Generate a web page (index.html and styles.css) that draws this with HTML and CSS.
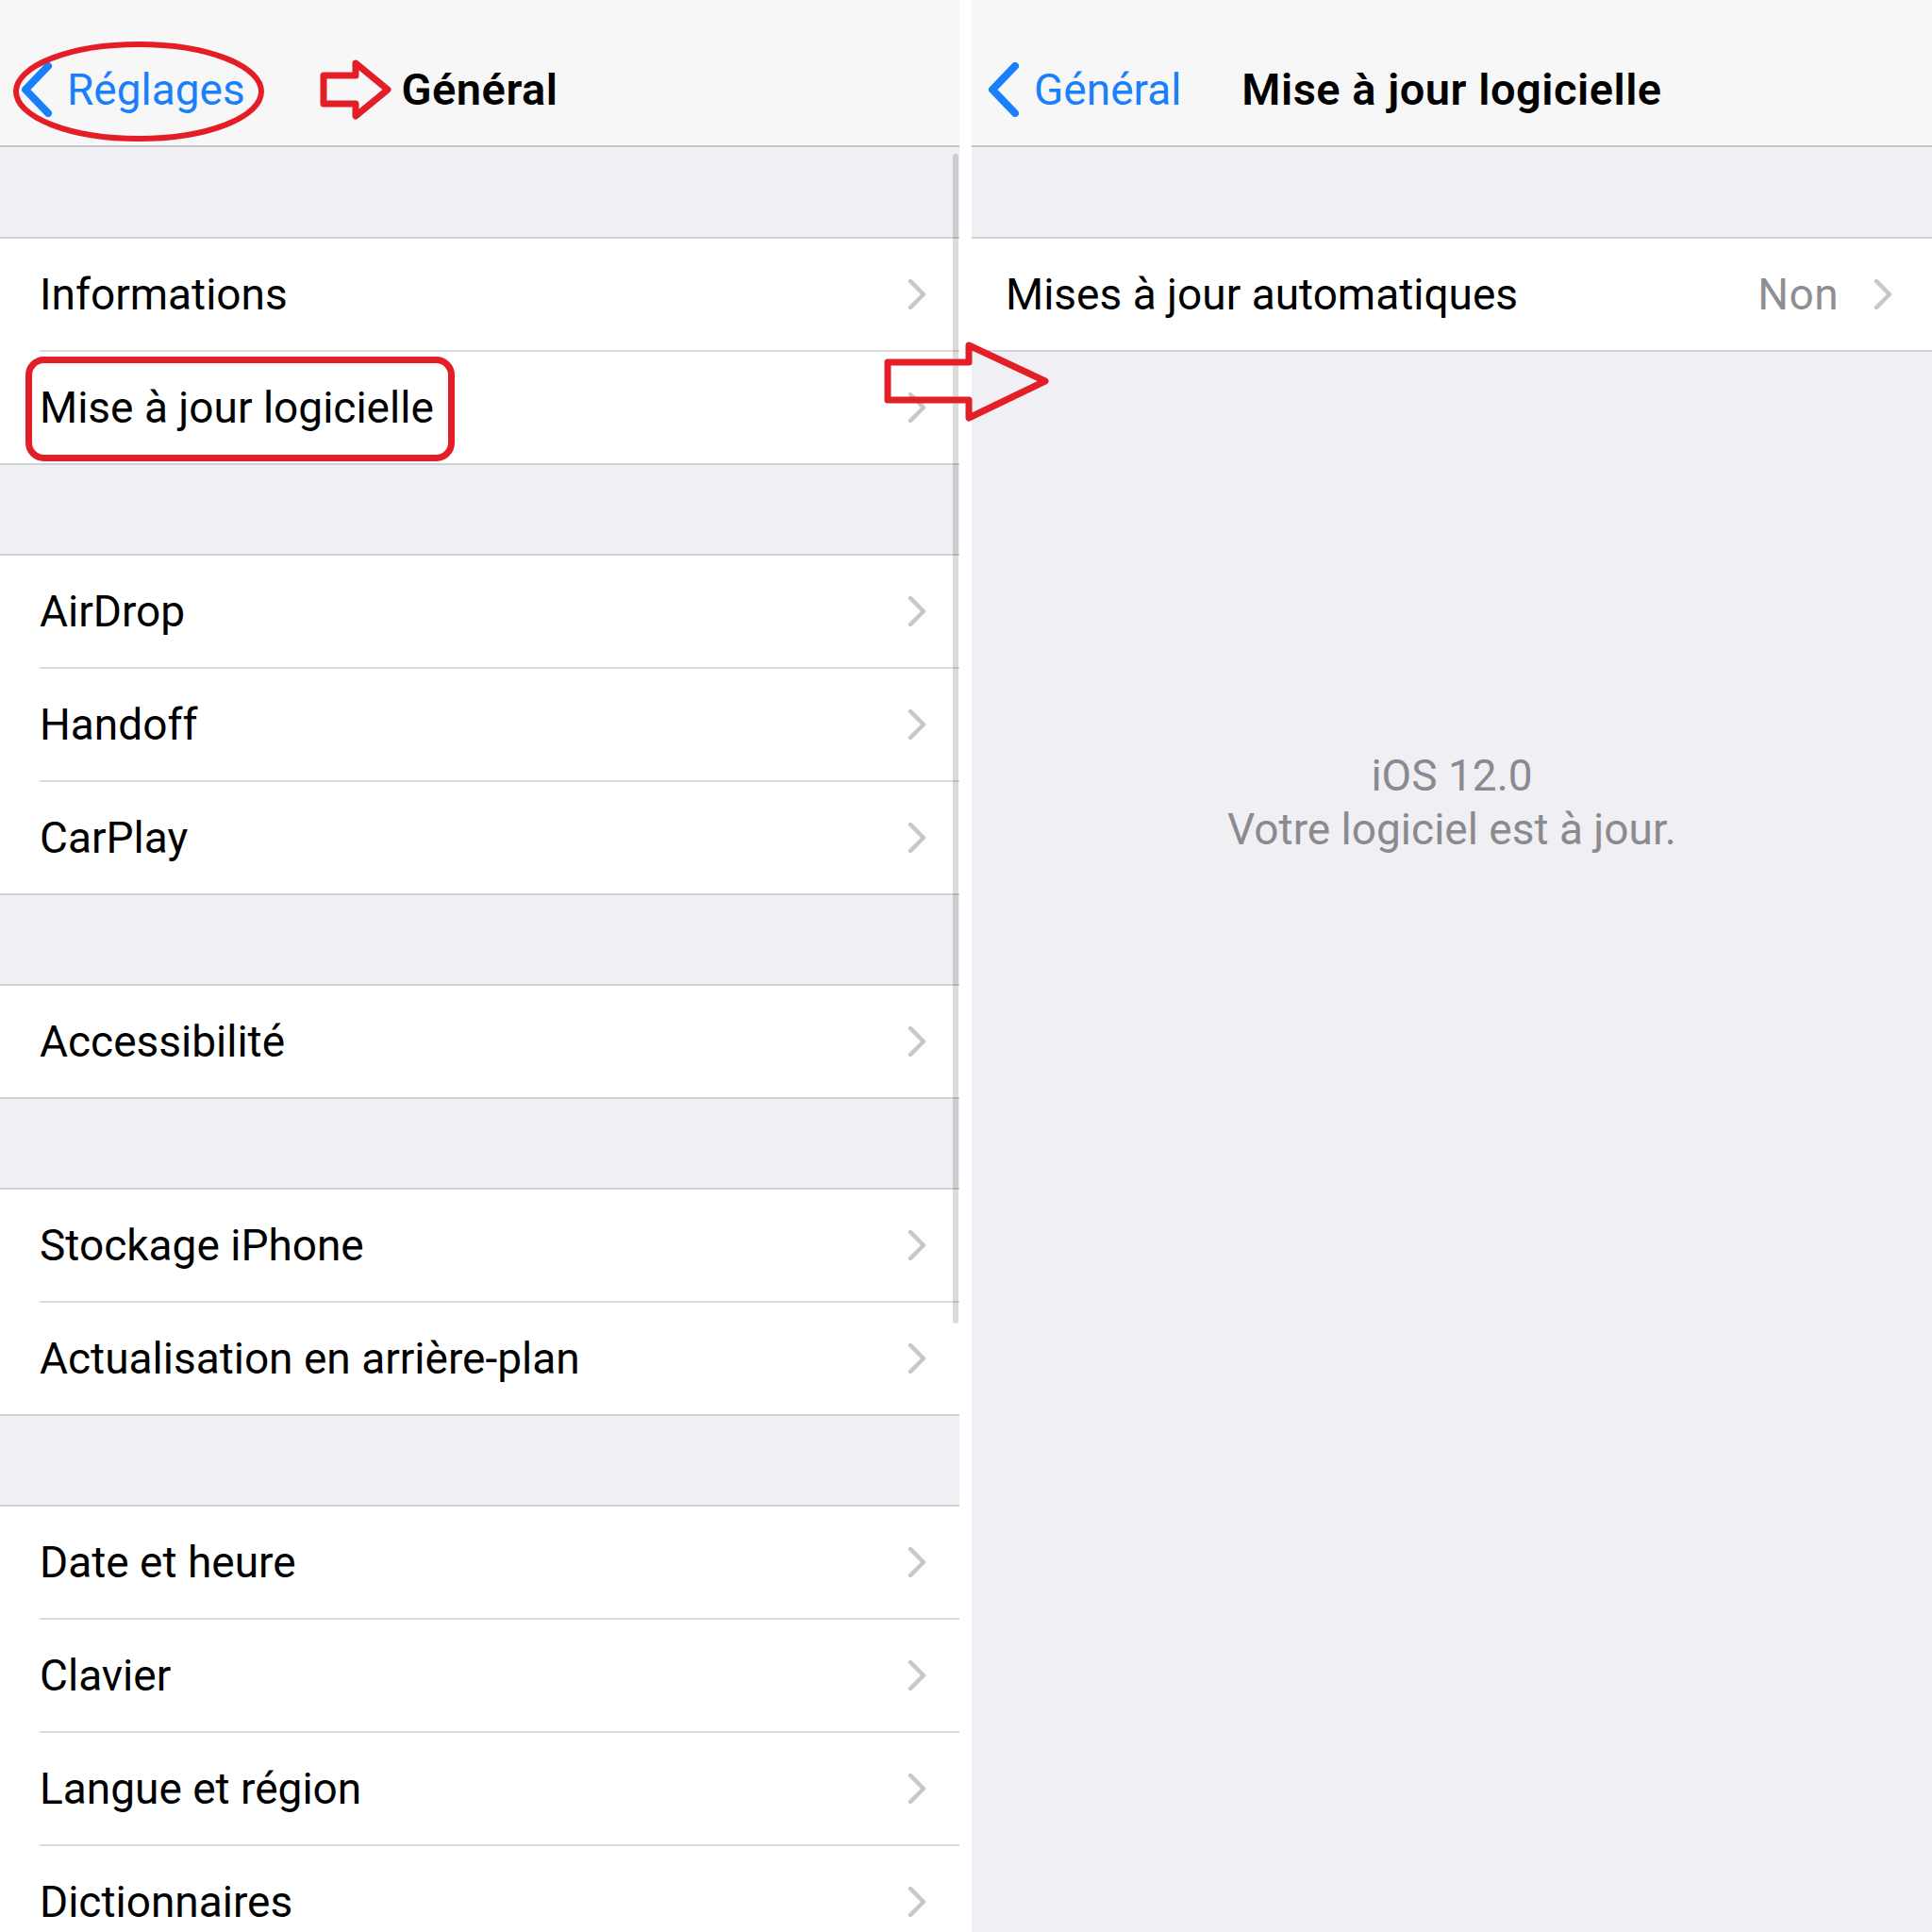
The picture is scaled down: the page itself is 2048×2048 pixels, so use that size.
FILE: index.html
```html
<!doctype html>
<html lang="fr">
<head>
  <meta charset="UTF-8">
  <meta name="viewport" content="width=device-width, initial-scale=1.0">
  <title>Général - Mise à jour logicielle</title>
  <link rel="stylesheet" href="styles.css">
</head>
<body>
<div id="compare">
  <!-- left screen: Réglages > Général -->
  <section class="screen screen-left">
    <header class="navbar">
      <a class="nav-back" href="#">
        <svg class="back-icon" viewBox="0 0 34 58"><polyline points="29,4 5,29 29,54"/></svg>
        <span>Réglages</span>
      </a>
      <h1 class="nav-title">Général</h1>
    </header>
    <div class="list">
      <div class="group">
        <div class="row"><div class="row-inner"><span class="row-label">Informations</span><svg class="chevron" viewBox="0 0 22 36"><polyline points="4,4 18,18 4,32"/></svg></div></div>
        <div class="row"><div class="row-inner"><span class="row-label">Mise à jour logicielle</span><svg class="chevron" viewBox="0 0 22 36"><polyline points="4,4 18,18 4,32"/></svg></div></div>
      </div>
      <div class="group">
        <div class="row"><div class="row-inner"><span class="row-label">AirDrop</span><svg class="chevron" viewBox="0 0 22 36"><polyline points="4,4 18,18 4,32"/></svg></div></div>
        <div class="row"><div class="row-inner"><span class="row-label">Handoff</span><svg class="chevron" viewBox="0 0 22 36"><polyline points="4,4 18,18 4,32"/></svg></div></div>
        <div class="row"><div class="row-inner"><span class="row-label">CarPlay</span><svg class="chevron" viewBox="0 0 22 36"><polyline points="4,4 18,18 4,32"/></svg></div></div>
      </div>
      <div class="group">
        <div class="row"><div class="row-inner"><span class="row-label">Accessibilité</span><svg class="chevron" viewBox="0 0 22 36"><polyline points="4,4 18,18 4,32"/></svg></div></div>
      </div>
      <div class="group">
        <div class="row"><div class="row-inner"><span class="row-label">Stockage iPhone</span><svg class="chevron" viewBox="0 0 22 36"><polyline points="4,4 18,18 4,32"/></svg></div></div>
        <div class="row"><div class="row-inner"><span class="row-label">Actualisation en arrière-plan</span><svg class="chevron" viewBox="0 0 22 36"><polyline points="4,4 18,18 4,32"/></svg></div></div>
      </div>
      <div class="group">
        <div class="row"><div class="row-inner"><span class="row-label">Date et heure</span><svg class="chevron" viewBox="0 0 22 36"><polyline points="4,4 18,18 4,32"/></svg></div></div>
        <div class="row"><div class="row-inner"><span class="row-label">Clavier</span><svg class="chevron" viewBox="0 0 22 36"><polyline points="4,4 18,18 4,32"/></svg></div></div>
        <div class="row"><div class="row-inner"><span class="row-label">Langue et région</span><svg class="chevron" viewBox="0 0 22 36"><polyline points="4,4 18,18 4,32"/></svg></div></div>
        <div class="row"><div class="row-inner"><span class="row-label">Dictionnaires</span><svg class="chevron" viewBox="0 0 22 36"><polyline points="4,4 18,18 4,32"/></svg></div></div>
      </div>
    </div>
    <div class="scrollbar"></div>
  </section>

  <!-- right screen: Général > Mise à jour logicielle -->
  <section class="screen screen-right">
    <header class="navbar">
      <a class="nav-back" href="#">
        <svg class="back-icon" viewBox="0 0 34 58"><polyline points="29,4 5,29 29,54"/></svg>
        <span>Général</span>
      </a>
      <h1 class="nav-title">Mise à jour logicielle</h1>
    </header>
    <div class="list">
      <div class="group">
        <div class="row"><div class="row-inner"><span class="row-label">Mises à jour automatiques</span><span class="row-value">Non</span><svg class="chevron" viewBox="0 0 22 36"><polyline points="4,4 18,18 4,32"/></svg></div></div>
      </div>
      <div class="update-status">
        <p>iOS 12.0</p>
        <p>Votre logiciel est à jour.</p>
      </div>
    </div>
  </section>

  <!-- red marks drawn over both screens -->
  <svg class="marks" viewBox="0 0 2048 2048">
    <ellipse cx="147" cy="97" rx="130" ry="50"/>
    <path d="M343 80 H377 V67 L411 95 L377 123 V110 H343 Z"/>
    <rect x="30.5" y="381.5" width="448" height="104" rx="16"/>
    <path d="M941 384 H1027 V366 L1108 404 L1027 443 V424 H941 Z"/>
  </svg>
</div>
</body>
</html>
```

FILE: styles.css
```css
* {
  margin: 0;
  padding: 0;
  box-sizing: border-box;
}
html, body {
  width: 2048px;
  height: 2048px;
  overflow: hidden;
  background: #fff;
}
body {
  font-family: Roboto, "Noto Sans", "Liberation Sans", sans-serif;
  font-size: 46px;
  color: #000;
}
#compare {
  position: relative;
  display: flex;
  gap: 13px;
  height: 100%;
}
.screen {
  position: relative;
  height: 100%;
  background: #efeff4;
  overflow: hidden;
}
.screen-left {
  width: 1017px;
  --inset: 42px;
  --edge: 34px;
  --back-left: 22px;
}
.screen-right {
  flex: 1;
  --inset: 36px;
  --edge: 41px;
  --back-left: 17px;
}

/* nav bar */
.navbar {
  display: grid;
  grid-template-columns: 1fr auto 1fr;
  align-items: center;
  height: 156px;
  padding-top: 36px;
  background: #f7f7f8;
  border-bottom: 2px solid #c6c6ca;
}
.nav-back {
  display: flex;
  align-items: center;
  gap: 15px;
  padding-left: var(--back-left);
  color: #1a7ffa;
  text-decoration: none;
  line-height: 118px;
  white-space: nowrap;
}
.back-icon {
  width: 34px;
  height: 58px;
}
.back-icon polyline {
  fill: none;
  stroke: #1a7ffa;
  stroke-width: 8;
  stroke-linecap: round;
  stroke-linejoin: round;
}
.nav-title {
  font-size: 47px;
  font-weight: 600;
  letter-spacing: 0.5px;
  line-height: 118px;
  white-space: nowrap;
}

/* grouped table */
.group {
  margin-top: 94px;
  background: #fff;
  border-top: 2px solid #d2d2d6;
  border-bottom: 2px solid #d2d2d6;
}
.group:first-child {
  margin-top: 95px;
}
.row {
  padding-left: var(--inset);
}
.row-inner {
  display: flex;
  align-items: center;
  height: 120px;
  padding-right: var(--edge);
  border-bottom: 2px solid #dcdce0;
  line-height: 118px;
}
.row:last-child .row-inner {
  height: 118px;
  border-bottom: 0;
}
.row-label {
  flex: 1;
  white-space: nowrap;
}
.row-value {
  color: #8e8e93;
  margin-right: 36px;
  letter-spacing: 0.4px;
}
.chevron {
  width: 22px;
  height: 36px;
}
.chevron polyline {
  fill: none;
  stroke: #c7c7cc;
  stroke-width: 4.5;
  stroke-linecap: round;
  stroke-linejoin: round;
}

.update-status {
  margin-top: 421px;
  text-align: center;
  color: #8a8a8f;
  line-height: 57px;
}

.scrollbar {
  position: absolute;
  top: 163px;
  right: 1px;
  width: 6px;
  height: 1240px;
  border-radius: 3px;
  background: rgba(0, 0, 0, 0.14);
}

/* annotation layer */
.marks {
  position: absolute;
  left: 0;
  top: 0;
  width: 2048px;
  height: 2048px;
  pointer-events: none;
}
.marks ellipse,
.marks rect,
.marks path {
  fill: none;
  stroke: #e41e26;
  stroke-width: 7;
  stroke-linejoin: round;
}
.marks ellipse {
  stroke-width: 6;
}
```
